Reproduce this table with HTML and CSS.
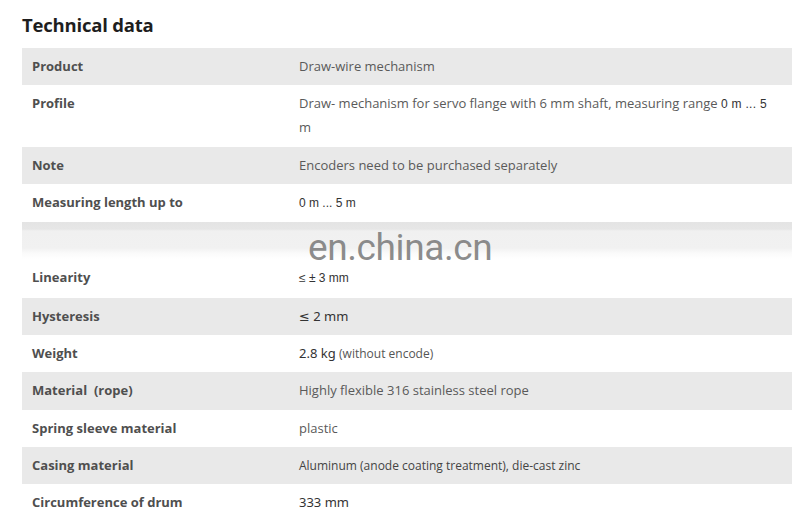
FILE: index.html
```html
<!DOCTYPE html>
<html>
<head>
<meta charset="utf-8">
<link rel="stylesheet" href="styles.css">
</head>
<body>
<div class="page">
  <h2 class="title">Technical data</h2>
  <div class="table-wrap">
    <table class="spec">
      <tr class="shade"><th>Product</th><td>Draw-wire mechanism</td></tr>
      <tr><th>Profile</th><td>Draw- mechanism for servo flange with 6 mm shaft, measuring range <span class="alt wide">0 m ... 5</span> m</td></tr>
      <tr class="shade"><th>Note</th><td>Encoders need to be purchased separately</td></tr>
      <tr><th>Measuring length up to</th><td><span class="alt">0 m ... 5 m</span></td></tr>
      <tr class="band"><th></th><td></td></tr>
      <tr><th>Linearity</th><td><span class="alt">≤ ± 3 mm</span></td></tr>
      <tr class="shade"><th>Hysteresis</th><td><span class="alt2">≤ 2 mm</span></td></tr>
      <tr><th>Weight</th><td><span class="alt2">2.8 kg</span> <span class="small">(without encode)</span></td></tr>
      <tr class="shade"><th>Material&nbsp;&nbsp;(rope)</th><td>Highly flexible 316 stainless steel rope</td></tr>
      <tr><th>Spring sleeve material</th><td>plastic</td></tr>
      <tr class="shade"><th>Casing material</th><td><span class="small dark">Aluminum (anode coating treatment), die-cast zinc</span></td></tr>
      <tr><th>Circumference of drum</th><td><span class="alt2">333 mm</span></td></tr>
    </table>
    <div class="watermark">en.china.cn</div>
  </div>
</div>
</body>
</html>
```
FILE: styles.css
```css
html, body {
  margin: 0;
  padding: 0;
  background: #fff;
}
.page {
  padding: 12px 8px 0 22px;
  font-family: "Open Sans", "Noto Sans", sans-serif;
}
.title {
  margin: 0 0 10px 0;
  font-size: 18.5px;
  line-height: 26px;
  font-weight: 700;
  color: #1e1e1e;
  letter-spacing: -0.2px;
}
.table-wrap {
  position: relative;
  width: 770px;
}
.spec {
  width: 770px;
  border-collapse: collapse;
  font-size: 13px;
  color: #555;
}
.spec th, .spec td {
  padding: 7px 10px 7.3px 10px;
  line-height: 23px;
  text-align: left;
  vertical-align: top;
}
.spec td {
  padding-right: 18px;
}
.spec th {
  width: 247px;
  font-weight: 700;
  color: #4f4f4f;
}
.spec td {
  font-weight: 400;
  color: #5a5a5a;
}
.spec tr.shade {
  background: #e9e9e9;
}
.spec tr.band {
  background: linear-gradient(to bottom, #e4e4e4 0, #e6e6e6 7px, #f0f0f0 9px, #f1f1f1 26px, #fafafa 31px, #ffffff 37px);
}
.spec tr.band th, .spec tr.band td {
  height: 23px;
}
.alt {
  font-family: "Liberation Sans", Arial, sans-serif;
  font-size: 12px;
  color: #333;
}
.alt.wide {
  white-space: nowrap;
  letter-spacing: 0.3px;
}
.alt2 {
  font-family: "Noto Sans", "DejaVu Sans", sans-serif;
  font-size: 13px;
  color: #333;
}
.small {
  font-size: 12px;
  color: #555;
}
.small.dark {
  color: #444;
}
.watermark {
  position: absolute;
  left: 286px;
  top: 180px;
  font-family: Roboto, "Liberation Sans", sans-serif;
  font-size: 37px;
  font-weight: 400;
  color: rgba(120, 120, 120, 0.85);
  letter-spacing: -0.4px;
  line-height: 40px;
}
```
